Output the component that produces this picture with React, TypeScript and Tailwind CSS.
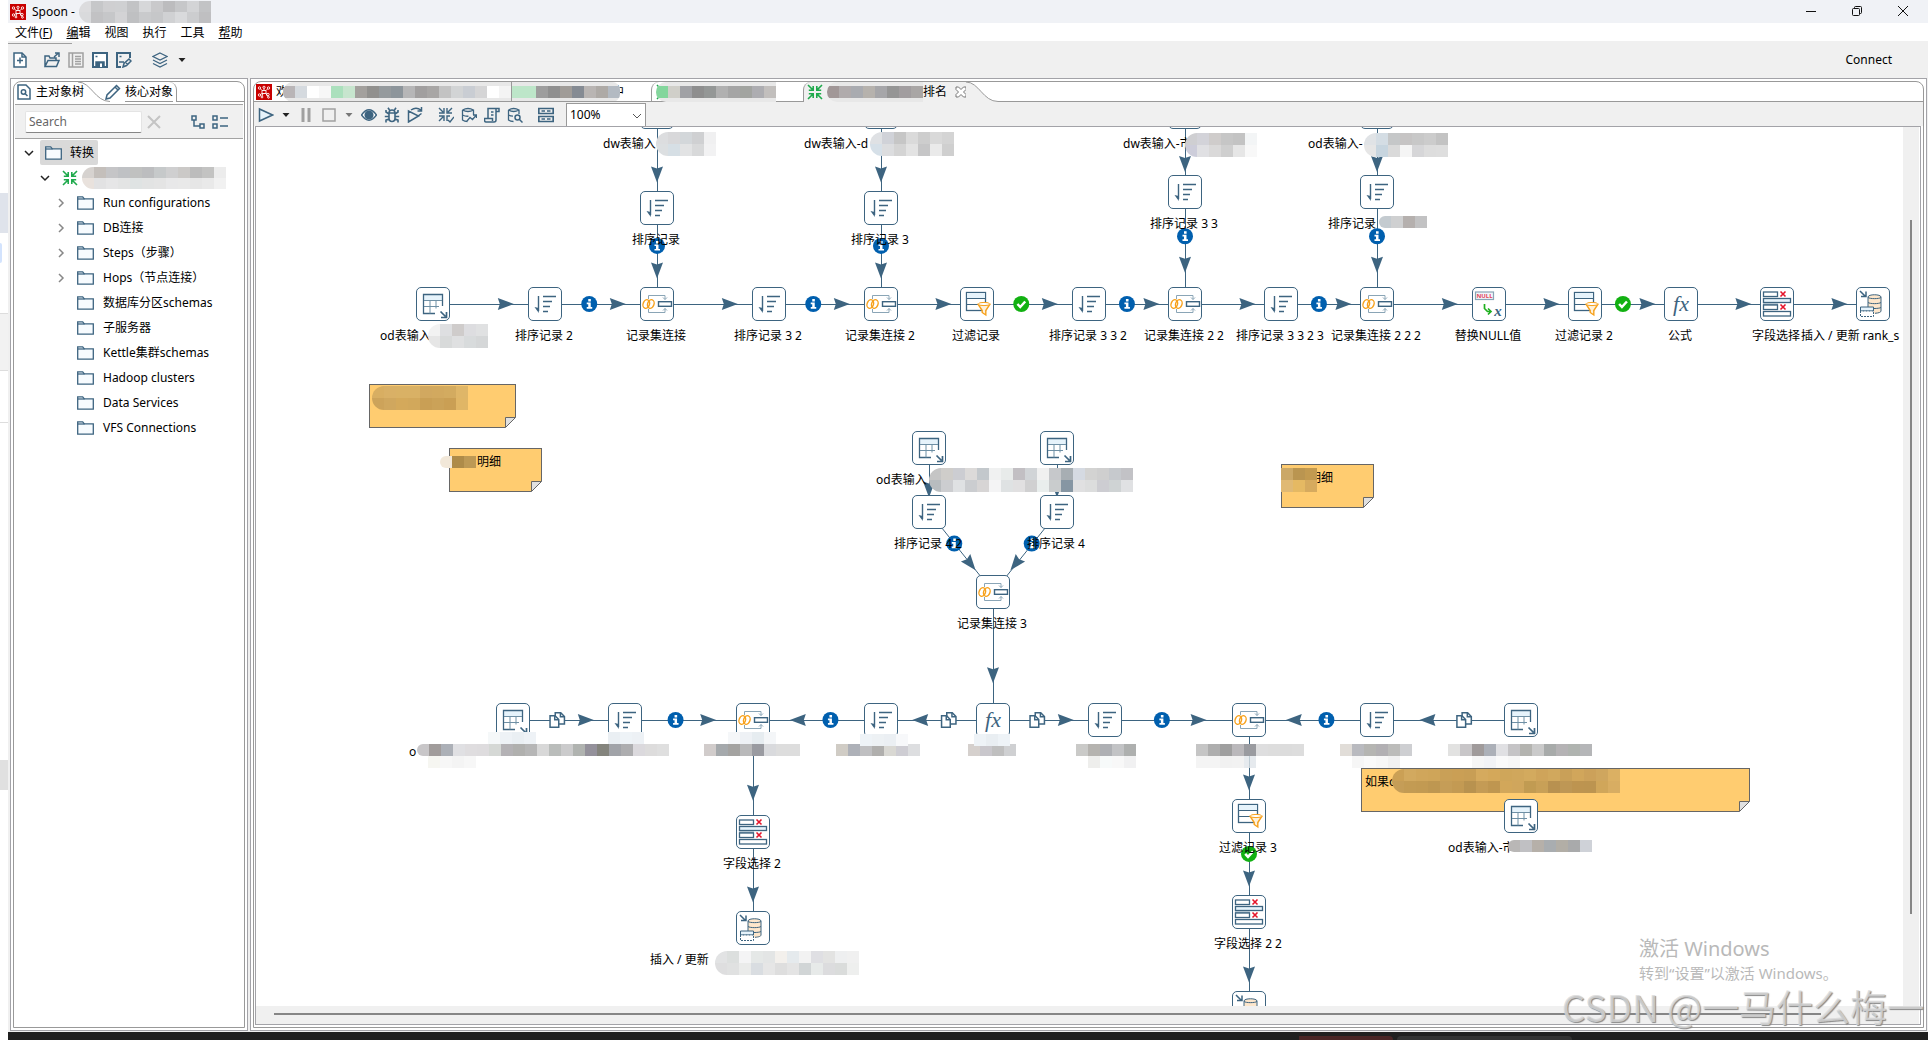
import React, { useState } from 'react';
import clsx from 'clsx';

type StepKind = 'table' | 'sort' | 'join' | 'filter' | 'formula' | 'select' | 'upsert' | 'nullif';
type HopBadge = 'info' | 'check' | 'copy';

interface Step {
  id: string;
  kind: StepKind;
  x: number;
  y: number;
  label?: string;
  // set when part of the name is masked, so the label can't be centred
  labelX?: number;
}

interface Hop {
  from: string;
  to: string;
  badge?: HopBadge;
}

interface MaskData {
  x: number;
  y: number;
  rows: string[][];
  round?: boolean;
  faded?: boolean;
}

interface NoteData {
  x: number;
  y: number;
  w: number;
  text?: string;
  indent?: boolean;
}

const INK = '#3d6480';

const steps: Step[] = [
  { id: 'dw1', kind: 'table', x: 401, y: -15, label: 'dw表输入', labelX: 347 },
  { id: 'dw2', kind: 'table', x: 625, y: -15, label: 'dw表输入-d', labelX: 548 },
  { id: 'dw3', kind: 'table', x: 929, y: -15, label: 'dw表输入-市', labelX: 867 },
  { id: 'od1', kind: 'table', x: 1121, y: -15, label: 'od表输入-', labelX: 1052 },
  { id: 's1', kind: 'sort', x: 401, y: 81, label: '排序记录' },
  { id: 's3', kind: 'sort', x: 625, y: 81, label: '排序记录 3' },
  { id: 's33', kind: 'sort', x: 929, y: 65, label: '排序记录 3 3' },
  { id: 's333', kind: 'sort', x: 1121, y: 65, label: '排序记录', labelX: 1072 },
  { id: 'od2', kind: 'table', x: 177, y: 177, label: 'od表输入', labelX: 124 },
  { id: 's2', kind: 'sort', x: 289, y: 177, label: '排序记录 2' },
  { id: 'j1', kind: 'join', x: 401, y: 177, label: '记录集连接' },
  { id: 's32', kind: 'sort', x: 513, y: 177, label: '排序记录 3 2' },
  { id: 'j2', kind: 'join', x: 625, y: 177, label: '记录集连接 2' },
  { id: 'f1', kind: 'filter', x: 721, y: 177, label: '过滤记录' },
  { id: 's332', kind: 'sort', x: 833, y: 177, label: '排序记录 3 3 2' },
  { id: 'j22', kind: 'join', x: 929, y: 177, label: '记录集连接 2 2' },
  { id: 's3323', kind: 'sort', x: 1025, y: 177, label: '排序记录 3 3 2 3' },
  { id: 'j222', kind: 'join', x: 1121, y: 177, label: '记录集连接 2 2 2' },
  { id: 'nul', kind: 'nullif', x: 1233, y: 177, label: '替换NULL值' },
  { id: 'f2', kind: 'filter', x: 1329, y: 177, label: '过滤记录 2' },
  { id: 'fx1', kind: 'formula', x: 1425, y: 177, label: '公式' },
  { id: 'sel1', kind: 'select', x: 1521, y: 177, label: '字段选择', labelX: 1496 },
  { id: 'up1', kind: 'upsert', x: 1617, y: 177, label: '插入 / 更新 rank_s', labelX: 1545 },
  { id: 'od3', kind: 'table', x: 673, y: 321, label: 'od表输入', labelX: 620 },
  { id: 'od4', kind: 'table', x: 801, y: 321 },
  { id: 's42', kind: 'sort', x: 673, y: 385, label: '排序记录 4 2' },
  { id: 's4', kind: 'sort', x: 801, y: 385, label: '排序记录 4' },
  { id: 'j3', kind: 'join', x: 737, y: 465, label: '记录集连接 3' },
  { id: 'od5', kind: 'table', x: 257, y: 593, label: 'o', labelX: 153 },
  { id: 's5', kind: 'sort', x: 369, y: 593 },
  { id: 'j4', kind: 'join', x: 497, y: 593 },
  { id: 's6', kind: 'sort', x: 625, y: 593 },
  { id: 'fx2', kind: 'formula', x: 737, y: 593 },
  { id: 's7', kind: 'sort', x: 849, y: 593 },
  { id: 'j5', kind: 'join', x: 993, y: 593 },
  { id: 's8', kind: 'sort', x: 1121, y: 593 },
  { id: 'od6', kind: 'table', x: 1265, y: 593 },
  { id: 'sel2', kind: 'select', x: 497, y: 705, label: '字段选择 2' },
  { id: 'up2', kind: 'upsert', x: 497, y: 801, label: '插入 / 更新', labelX: 394 },
  { id: 'f3', kind: 'filter', x: 993, y: 689, label: '过滤记录 3' },
  { id: 'sel22', kind: 'select', x: 993, y: 785, label: '字段选择 2 2' },
  { id: 'up3', kind: 'upsert', x: 993, y: 881 },
  { id: 'od7', kind: 'table', x: 1265, y: 689, label: 'od表输入-市', labelX: 1192 },
];

const hops: Hop[] = [
  { from: 'dw1', to: 's1' },
  { from: 'dw2', to: 's3' },
  { from: 'dw3', to: 's33' },
  { from: 'od1', to: 's333' },
  { from: 's1', to: 'j1', badge: 'info' },
  { from: 's3', to: 'j2', badge: 'info' },
  { from: 's33', to: 'j22', badge: 'info' },
  { from: 's333', to: 'j222', badge: 'info' },
  { from: 'od2', to: 's2' },
  { from: 's2', to: 'j1', badge: 'info' },
  { from: 'j1', to: 's32' },
  { from: 's32', to: 'j2', badge: 'info' },
  { from: 'j2', to: 'f1' },
  { from: 'f1', to: 's332', badge: 'check' },
  { from: 's332', to: 'j22', badge: 'info' },
  { from: 'j22', to: 's3323' },
  { from: 's3323', to: 'j222', badge: 'info' },
  { from: 'j222', to: 'nul' },
  { from: 'nul', to: 'f2' },
  { from: 'f2', to: 'fx1', badge: 'check' },
  { from: 'fx1', to: 'sel1' },
  { from: 'sel1', to: 'up1' },
  { from: 'od3', to: 's42' },
  { from: 'od4', to: 's4' },
  { from: 's42', to: 'j3', badge: 'info' },
  { from: 's4', to: 'j3', badge: 'info' },
  { from: 'j3', to: 'fx2' },
  { from: 'od5', to: 's5', badge: 'copy' },
  { from: 's5', to: 'j4', badge: 'info' },
  { from: 's6', to: 'j4', badge: 'info' },
  { from: 'fx2', to: 's6', badge: 'copy' },
  { from: 'fx2', to: 's7', badge: 'copy' },
  { from: 's7', to: 'j5', badge: 'info' },
  { from: 's8', to: 'j5', badge: 'info' },
  { from: 'od6', to: 's8', badge: 'copy' },
  { from: 'j4', to: 'sel2' },
  { from: 'sel2', to: 'up2' },
  { from: 'j5', to: 'f3' },
  { from: 'f3', to: 'sel22', badge: 'check' },
  { from: 'sel22', to: 'up3' },
];

const notes: NoteData[] = [
  { x: 113, y: 257, w: 147 },
  { x: 193, y: 321, w: 93, text: '明细', indent: true },
  { x: 1025, y: 337, w: 93, text: '明细', indent: true },
  { x: 1105, y: 641, w: 389, text: '如果o' },
];

const masks: MaskData[] = [
  { x: 400, y: 5, round: true, rows: [
    ['#dcdddf', '#d8d8da', '#d3d7da', '#cfd0d2', '#f0f0f1'],
    ['#dcdfe1', '#d6dfe5', '#e2e3e4', '#d8d9da', '#f2f2f3'],
  ] },
  { x: 614, y: 5, round: true, rows: [
    ['#dfe1e4', '#d0d2d8', '#c6c6c6', '#dadada', '#cdcdcd', '#d9d9d9', '#d4d4d4'],
    ['#d6e0e8', '#dcdddf', '#d4d4d4', '#e3e3e3', '#c6c6c7', '#eaeaea', '#cfcfcf'],
  ] },
  { x: 929, y: 6, round: true, rows: [
    ['#cfcfd2', '#d3d3d9', '#cfcccb', '#c6c6c6', '#c3c3c3', '#f3f5f6'],
    ['#cdcdda', '#e0e0e3', '#dad9d9', '#cfcfcf', '#e6e6e6', '#f8f8f8'],
  ] },
  { x: 1108, y: 6, round: true, rows: [
    ['#e0e3e6', '#d4dde4', '#c5c7c8', '#c6c4c4', '#c8c8c8', '#cccccc', '#c3c3c3'],
    ['#e6e6e6', '#c7d5df', '#dadada', '#f5f5f5', '#d6d6d8', '#dddddd', '#dedede'],
  ] },
  { x: 1123, y: 89, round: true, rows: [['#c4cbd0', '#cfd0d1', '#b5b0ae', '#c2c2c3']] },
  { x: 172, y: 197, round: true, rows: [
    ['#f2f2f2', '#dedfe1', '#cfcccb', '#dddde0', '#e0e1e2'],
    ['#e6e6e6', '#d8dada', '#dfe0e1', '#d8dbdc', '#d5d7d8'],
  ] },
  { x: 673, y: 341, round: true, rows: [
    ['#c5c5c5', '#cfcdca', '#cccdd2', '#dcdad9', '#c3c8cc', '#f0f1f1', '#e8ebea', '#c2bfc3', '#d1d4d7', '#f0f0f0', '#c6c8cb', '#a7aeb3', '#d5dae2', '#d3d3d2', '#cfcfcf', '#c6c9cd', '#c2c2c6'],
    ['#b8bcbf', '#cccdd0', '#dfe1e3', '#cbcdd0', '#d7d5d5', '#f4f4f5', '#dfe2e3', '#e1e0e1', '#d0d0d1', '#e9eeed', '#c9cccd', '#8696a3', '#e0e0e1', '#dcdddd', '#cdcdd2', '#cfd3d4', '#e0e1e3'],
  ] },
  { x: 116, y: 259, round: true, rows: [
    ['#d8ae62', '#d9b066', '#d9b165', '#d9b165', '#d1a860', '#d2a95f', '#d3ab60', '#dfb668'],
    ['#cda35a', '#d0a75e', '#d4a95b', '#d2a85b', '#c99f55', '#cba258', '#ca9f54', '#e0b666'],
  ] },
  { x: 184, y: 329, round: true, rows: [['#f2e8d9', '#ae8b49', '#bd9955']] },
  { x: 1025, y: 341, rows: [
    ['#cba867', '#ba9550', '#c29a50'],
    ['#e0b974', '#e5b963', '#d6aa5e'],
  ] },
  { x: 161, y: 617, round: true, rows: [[
    '#c8c6c8', '#a19c9b', '#acb0b7', '#e0e0e3', '#dfdddf', '#dedcde', '#d5d8d5', '#b4b2b5', '#b0b0ae', '#b6b6b6', '#d8d8d8',
    '#babdbb', '#cbcbcc', '#b0b3b0', '#94919b', '#84847d', '#a1a3a8', '#adadaf', '#dbd9dd', '#dddcdc', '#dfdfdf',
  ]] },
  { x: 448, y: 617, rows: [['#d1cccb', '#a5a9ac', '#a4a3a1', '#b9b9ba', '#9a9ba1', '#d9dadd', '#dddddd', '#dddddd']] },
  { x: 580, y: 617, rows: [['#d0ccc5', '#aeb1b8', '#bfbfc1', '#b0afad', '#d9d8d3', '#cecdd3', '#dddee0']] },
  { x: 712, y: 617, rows: [['#d5d0cd', '#c9c7cc', '#bfbfbf', '#cfd0d2']] },
  { x: 820, y: 617, rows: [['#cacac8', '#b5b3af', '#aeb0b4', '#c2c3c5', '#aeb0af']] },
  { x: 940, y: 617, rows: [['#c5c5c5', '#aeaeae', '#9f9f9f', '#bab8bb', '#9a9ba0', '#dededf', '#dddddd', '#dcdcdc', '#dddddd']] },
  { x: 1084, y: 617, rows: [['#e1ddd8', '#b9babf', '#b5b5b2', '#b2b0b3', '#bcbcba', '#cecfd2']] },
  { x: 1192, y: 617, rows: [['#e2e2e1', '#c8c6c8', '#a09b9b', '#acb0b8', '#e0e0e3', '#c5c4c6', '#b4b4b0', '#cacaca', '#a8abaa', '#b5b3b5', '#b0b4b0', '#b5b6b8']] },
  // pale row over the bottom edge of the steps
  { x: 232, y: 605, rows: [['#f5f8f9', '#eef2f6', '#eaeff3', '#eef2f6']] },
  { x: 352, y: 605, rows: [['#eaeff3', '#eef3f7', '#edf1f5']] },
  { x: 472, y: 605, rows: [['#f5f7f9', '#eef1f5', '#e6ecf0', '#f4f6f8']] },
  { x: 604, y: 607, rows: [['#eef3f7', '#edf1f4', '#ebeff3', '#f7f8fa']] },
  { x: 718, y: 607, rows: [['#eef3f7', '#e9eef2', '#eef3f7']] },
  // second, fainter row that hangs under the masked names
  { x: 172, y: 629, faded: true, rows: [['#f4f4ee', '#f6f6f6', '#f2f2f2', '#f6f6f6']] },
  { x: 832, y: 629, faded: true, rows: [['#ebebe8', '#f6f9fa', '#f7f7f7', '#eeeeef']] },
  { x: 940, y: 629, faded: true, rows: [['#f2f2f2', '#f2f2f2', '#eeeeee', '#f0f0f0', '#e0e6ea']] },
  { x: 1096, y: 629, faded: true, rows: [['#f5f5f5', '#fafafa', '#f6f6f6', '#eeeeee']] },
  { x: 1216, y: 629, faded: true, rows: [['#f5f5f5', '#eff1f5', '#fafafa', '#f6f6f6']] },
  { x: 1136, y: 642, round: true, rows: [
    ['#cba055', '#d2a95f', '#d0a65b', '#cfa559', '#c9a057', '#ca9f55', '#c89e55', '#d5aa5e', '#d4a85a', '#cfa65a', '#d0a75c', '#d3aa5e', '#cfa45a', '#d1a85d', '#c9a058', '#d1a65b', '#cca15a', '#cfa65e', '#dbb063'],
    ['#c59d57', '#c39b53', '#c29a52', '#be9751', '#c59d57', '#c39a53', '#b8924f', '#c49b55', '#bf9650', '#d2a75a', '#d0a65c', '#c19b52', '#c8a057', '#b89150', '#be9755', '#bd9450', '#bc9450', '#d0a65a', '#d8ad62'],
  ] },
  { x: 1252, y: 713, round: true, rows: [['#b9b7b6', '#c0c0c3', '#b6b0a9', '#a9adb0', '#b2aea6', '#a9aaab', '#cfd2d8']] },
  { x: 459, y: 824, round: true, rows: [
    ['#e2e3e4', '#dcdfde', '#f4f4f5', '#e5e8e7', '#e3e5e5', '#f3f0ec', '#e5eaed', '#f2f2f2', '#dfdfe3', '#e3e3e2', '#eeeff0', '#f0f0f0'],
    ['#dededf', '#e0e1e1', '#eaebea', '#d9dde1', '#e6e6e6', '#dedede', '#e4e4e4', '#d1d5d6', '#e7eae9', '#dcdcde', '#dadcdb', '#eeefee'],
  ] },
];

function StepIcon({ kind }: { kind: StepKind }) {
  if (kind === 'formula') {
    return <span className="font-['Liberation_Serif',serif] text-[22px] italic leading-none text-[#3d6480]">fx</span>;
  }

  return (
    <svg viewBox="0 0 34 34" className="size-[34px] shrink-0" fill="none" stroke={INK}>
      {kind === 'sort' && (
        <>
          <path d="M10.5 9v15" strokeWidth="1.4" />
          <path d="M6.500 20l4.300 1v5z" fill={INK} stroke="none" />
          <path d="M15 9.500h13M15 14.500h9M15 19.500h7M15 24.500h5" strokeWidth="1.400" />
        </>
      )}
      {kind === 'join' && (
        <>
          <g stroke="#f7a11b" strokeWidth="1.400">
            <ellipse cx="6.300" cy="17" rx="3.200" ry="4.400" transform="rotate(20 6.300 17)" />
            <ellipse cx="10.800" cy="17" rx="3.200" ry="4.400" transform="rotate(20 10.800 17)" />
          </g>
          <rect x="18.500" y="14.700" width="13" height="4.600" strokeWidth="1.400" />
          <g stroke="#8aa5b6">
            <path d="M8.500 12V8.500h16.500v4M8.500 22v3.500h16.500v-4" />
            <path d="M23 10.500l2 2 2-2M23 23.500l2-2 2 2" />
          </g>
        </>
      )}
      {kind === 'table' && (
        <>
          <rect x="8" y="8" width="18" height="5" fill="#e6f3fb" stroke="none" />
          <path d="M26.500 19V7.500h-19v19H19" strokeWidth="1.300" />
          <path d="M8 13.500h18M8 19.500h15M14 13.500v13M20 13.500v8" stroke="#6f90a5" />
          <path d="M24.500 24.500l5 5M30.500 25v5.500H25" strokeWidth="1.700" />
        </>
      )}
      {kind === 'filter' && (
        <>
          <rect x="6.500" y="5.500" width="19" height="18" fill="#fff" strokeWidth="1.300" />
          <path d="M7 6h18v5H7z" fill="#e6f3fb" stroke="none" />
          <path d="M7 11.500h18M7 17.500h18" />
          <path d="M18.200 17.500h11.600l-4 6v4.500l-3.600-2.500v-2z" fill="#fdf0da" stroke="#f7a11b" strokeWidth="1.400" />
          <ellipse cx="24" cy="17" rx="5.600" ry="1.600" fill="#fff" stroke="#f7a11b" />
        </>
      )}
      {kind === 'select' && (
        <>
          <rect x="3.500" y="5" width="14" height="4.500" strokeWidth="1.300" />
          <rect x="3.500" y="11.500" width="27" height="4" fill="#e6f3fb" strokeWidth="1.300" />
          <path d="M3 16.500h15v1.500H3z" fill="#7f9db2" stroke="none" />
          <rect x="3.500" y="18" width="14" height="4.500" strokeWidth="1.300" />
          <rect x="3.500" y="24.500" width="27" height="4.500" strokeWidth="1.300" />
          <path d="M20.500 4.500l5 5M25.500 4.500l-5 5M20.500 17.500l5 5M25.500 17.500l-5 5" stroke="#e4152b" strokeWidth="1.600" />
        </>
      )}
      {kind === 'upsert' && (
        <>
          <path d="M4 4l5 5M10 4.500v5H5" strokeWidth="1.500" />
          <path d="M12 10c0-3 13-3 13 0v14c0 1.500-3 2.500-7 2.500h-6z" fill="#fde6cb" stroke="none" />
          <path d="M12 20V10c0-3 13-3 13 0v14c0 1.200-2 2-6 2.300" />
          <path d="M12 10.500c2 1.500 11 1.500 13 0M12 15.500c2 1.500 11 1.500 13 0M18 21.500c3 0 6-.3 7-1" />
          <path d="M4.500 24v-4h13v4z" fill="#e6f3fb" />
          <path d="M4.500 24v5.500h13V24z" fill="#fff" strokeDasharray="2 1" />
        </>
      )}
      {kind === 'nullif' && (
        <>
          <rect x="3.500" y="5" width="18" height="7.500" fill="#f1f6fa" stroke="#8aa5b6" strokeWidth="1.200" />
          <text x="12.500" y="11.200" textAnchor="middle" fontSize="6" fontWeight="700" fill="#e4455a" stroke="none">NULL</text>
          <path d="M12.500 17v4.500l3 3h3M16 21.500l3 3-3 3" stroke="#1fb01f" strokeWidth="1.700" />
          <text x="26" y="28.500" textAnchor="middle" fontFamily="Liberation Serif" fontStyle="italic" fontWeight="700" fontSize="15" fill={INK} stroke="none">x</text>
        </>
      )}
    </svg>
  );
}

function Badge({ kind, x, y }: { kind: HopBadge; x: number; y: number }) {
  return (
    <g transform={`translate(${x} ${y})`}>
      {kind === 'info' && (
        <>
          <circle r="8" fill="#005fae" />
          <path d="M-1 -5h2.600v2.500h-2.600zM-2.500 -1.500h4v4.500h1.500v1.700h-5.500v-1.700h1.500v-2.800h-1.500z" fill="#fff" />
        </>
      )}
      {kind === 'check' && (
        <>
          <circle r="8" fill="#12b112" />
          <path d="M-3.800 0l2.800 3 5-5.500" fill="none" stroke="#fff" strokeWidth="2.500" />
        </>
      )}
      {kind === 'copy' && (
        <g fill="#fff" stroke={INK} strokeWidth="1.500">
          <path d="M-2 -7.200h5.500l3.700 3.700V4h-9.200z" />
          <path d="M3.200 -7v3.800H7" fill="none" />
          <path d="M-7.200 -4.200h5l3.700 3.700v7.700h-8.700z" />
          <path d="M-2.500 -4v3.800H1.300" fill="none" />
        </g>
      )}
    </g>
  );
}

function HopLine({ hop }: { hop: Hop }) {
  const a = steps.find(s => s.id === hop.from)!;
  const b = steps.find(s => s.id === hop.to)!;
  const at = (t: number) => ({ x: a.x + (b.x - a.x) * t, y: a.y + (b.y - a.y) * t });
  const angle = (Math.atan2(b.y - a.y, b.x - a.x) * 180) / Math.PI;
  const arrow = at(0.65);
  const badge = at(0.395);

  return (
    <g>
      <line x1={a.x + 0.5} y1={a.y + 0.5} x2={b.x + 0.5} y2={b.y + 0.5} stroke={INK} />
      <path
        d="M8 0L-8 -6L-6 0L-8 6z"
        fill={INK}
        transform={`translate(${arrow.x} ${arrow.y}) rotate(${angle})`}
      />
      {hop.badge && <Badge kind={hop.badge} x={badge.x} y={badge.y} />}
    </g>
  );
}

function Note({ note }: { note: NoteData }) {
  return (
    <div
      className="absolute h-11 border border-[#666] bg-[#ffcc70] px-[3px] pt-1 leading-[17px]"
      style={{ left: note.x, top: note.y, width: note.w }}
    >
      <span className={note.indent ? 'pl-6' : ''}>{note.text}</span>
      <svg viewBox="0 0 11 11" className="absolute -bottom-px -right-px size-[11px]">
        <path d="M0 11L11 0v11z" fill="#fff" />
        <path d="M.5 10.500V.5h10z" fill="#e0e0e0" stroke="#666" />
      </svg>
    </div>
  );
}

interface PixelsProps {
  rows: string[][];
  round?: boolean;
  faded?: boolean;
  short?: boolean;
  halo?: boolean;
}

function Pixels({ rows, round, faded, short, halo }: PixelsProps) {
  return (
    <div
      className={clsx(
        'relative z-10 overflow-hidden',
        round && 'rounded-l-full',
        faded && 'opacity-80',
        halo && 'rounded-r-lg bg-[#e8e8e8] py-1',
      )}
    >
      {rows.map((row, i) => (
        <div key={i} className="flex">
          {row.map((color, j) => (
            <i key={j} className={clsx('w-3 shrink-0', short ? 'h-[11px]' : 'h-3')} style={{ backgroundColor: color }} />
          ))}
        </div>
      ))}
    </div>
  );
}

function Icon({ children, muted }: { children: React.ReactNode; muted?: boolean }) {
  return (
    <svg viewBox="0 0 16 16" className="size-4 shrink-0" fill="none" stroke={muted ? '#a0a0a0' : INK} strokeWidth="1.500">
      {children}
    </svg>
  );
}

function Logo() {
  return (
    <svg viewBox="0 0 16 16" className="size-4 shrink-0" fill="none" stroke="#fff" strokeWidth=".9">
      <rect width="16" height="16" fill="#c80000" stroke="none" />
      <circle cx="3.500" cy="4" r="1.200" />
      <circle cx="8" cy="3.300" r="1.100" />
      <circle cx="12.500" cy="4" r="1.200" />
      <circle cx="3.500" cy="11" r="1.200" />
      <circle cx="12" cy="10.500" r="1.200" />
      <circle cx="6" cy="13" r=".9" />
      <circle cx="12.500" cy="13.300" r=".9" />
      <path d="M4.500 4.800L6 6.500h4L11.500 5M6 6.500v3L4.500 10.500M10 6.500v3l1 .8M6 9.500h4M8 4.500v2M6 12l1-2.500M10 9.500l1.500 3" />
    </svg>
  );
}

function TransIcon() {
  return (
    <svg viewBox="0 0 16 16" className="size-4 shrink-0" fill="none" stroke="#1faa4c" strokeWidth="1.600">
      <path d="M1 1l5 5M6.200 2v4.200H1.800M15 1l-5 5M9.800 2v4.200h4.400M1 15l5-5M6.200 14V9.800H1.800M15 15l-5-5M9.800 14V9.800h4.400" />
    </svg>
  );
}

function Folder() {
  return (
    <svg viewBox="0 0 17 14" className="h-[14px] w-[17px] shrink-0" fill="#f7fbfe" stroke={INK} strokeWidth="1.300">
      <path d="M.7 13.200V.8h5l1.600 2h9v10.400z" />
      <path d="M1 3h6.500" />
    </svg>
  );
}

function Caret({ muted }: { muted?: boolean }) {
  return (
    <svg viewBox="0 0 10 6" className="h-[6px] w-[10px]">
      <path d="M1.500 1h7L5 5z" fill={muted ? '#777' : '#222'} />
    </svg>
  );
}

function Chevron({ open }: { open?: boolean }) {
  return (
    <svg viewBox="0 0 10 10" className="size-[10px] shrink-0" fill="none" strokeWidth="1.500" stroke={open ? '#222' : '#888'}>
      <path d={open ? 'M1 3l4 4 4-4' : 'M3 1l4 4-4 4'} />
    </svg>
  );
}

function TabCurve({ fill }: { fill: string }) {
  return (
    <svg viewBox="0 0 32 20" className="h-5 w-8 shrink-0" fill={fill}>
      <path d="M0 0C13 0 17 19.500 32 19.500V20H0z" stroke="none" />
      <path d="M0 0C13 0 17 19.500 32 19.500" fill="none" stroke="#999" />
    </svg>
  );
}

const treeItems = [
  { label: 'Run configurations', expandable: true },
  { label: 'DB连接', expandable: true },
  { label: 'Steps（步骤）', expandable: true },
  { label: 'Hops（节点连接）', expandable: true },
  { label: '数据库分区schemas' },
  { label: '子服务器' },
  { label: 'Kettle集群schemas' },
  { label: 'Hadoop clusters' },
  { label: 'Data Services' },
  { label: 'VFS Connections' },
];

function TitleBar() {
  return (
    <header className="relative flex h-[23px] shrink-0 items-center bg-[#f0f2f6] pl-[2px]">
      <Logo />
      <h1 className="ml-[6px] whitespace-nowrap">Spoon -</h1>
      <div className="ml-1">
        <Pixels
          short
          round
          rows={[
            ['#dcdcde', '#c6c7c9', '#cfcfd1', '#cfd0d2', '#c2c3c5', '#d6d7d9', '#c9c9cb', '#bcbcbe', '#c6c7c9', '#d3d4d6', '#c2c3c5'],
            ['#d9dadc', '#c2c2c4', '#c6c7c9', '#d3d3d5', '#bfc0c2', '#c9cacc', '#c6c7c9', '#d0d1d3', '#d9dadc', '#cccdcf', '#bfbfc1'],
          ]}
        />
      </div>
      <div className="ml-auto mr-[2px] flex h-full items-center pb-[2px] text-[#111]">
        <button aria-label="最小化" className="flex w-[46px] justify-center">
          <svg viewBox="0 0 10 10" className="size-[10px]" stroke="currentColor"><path d="M0 5.500h10" /></svg>
        </button>
        <button aria-label="还原" className="flex w-[46px] justify-center">
          <svg viewBox="0 0 10 10" className="size-[10px]" fill="none" stroke="currentColor">
            <rect x=".5" y="2.500" width="7" height="7" rx="1" />
            <path d="M2.500 2.500V1.500q0-1 1-1h5q1 0 1 1v5q0 1-1 1h-1" />
          </svg>
        </button>
        <button aria-label="关闭" className="flex w-[46px] justify-center">
          <svg viewBox="0 0 10 10" className="size-[10px]" stroke="currentColor"><path d="M0 0l10 10M10 0L0 10" /></svg>
        </button>
      </div>
    </header>
  );
}

function MainToolbar() {
  return (
    <div className="relative flex h-[37px] shrink-0 items-center bg-[#f0f0f0] pl-1 pr-9 before:absolute before:left-0 before:top-[2px] before:h-px before:w-16 before:bg-[#a0a0a0]">
      <button aria-label="新建">
        <Icon><path d="M2 1h8l4 4v10H2z" fill="#fff" /><path d="M10 1v4h4M8 5.500v6M5 8.500h6" /></Icon>
      </button>
      <button aria-label="打开" className="ml-4">
        <Icon><path d="M1 14V4h4l1 2h6v3M1 14.500l3-6h11l-2.500 6zM10 5l4-3.500M11 1h4v4" /></Icon>
      </button>
      <button aria-label="浏览" className="ml-2">
        <Icon muted><rect x="1" y="1" width="14" height="14" /><path d="M4.500 1v14M7 4.500h6M7 7h6M7 9.500h6M7 12h6" /></Icon>
      </button>
      <button aria-label="保存" className="ml-2">
        <Icon><path d="M1 1h14v14H1z" fill="#fff" strokeWidth="2" /><path d="M4 10h8v5H4z" fill={INK} /><path d="M8 11.500h2V15H8z" fill="#fff" stroke="none" /><path d="M3.500 4.500h2" /></Icon>
      </button>
      <button aria-label="另存为" className="ml-2">
        <Icon><path d="M14 6V1H1v14h4" strokeWidth="2" /><path d="M3.500 4.500h2M3 10h5M7 15l1-3.500L13 7l2 2-4.500 4.500zM10 11l2 1.500" /></Icon>
      </button>
      <button aria-label="透视图" className="ml-5 flex items-center gap-[9px]">
        <Icon><path d="M8 1l7 3.500L8 8 1 4.500zM1 8l7 3.500L15 8M1 11.500L8 15l7-3.500" strokeWidth="1.200" /></Icon>
        <Caret />
      </button>
      <button className="ml-auto">Connect</button>
    </div>
  );
}

function Explorer() {
  const [query, setQuery] = useState('');

  return (
    <aside className="flex w-[238px] shrink-0 flex-col border border-[#a3a3a8] bg-white p-[2px]">
      <div className="flex flex-1 flex-col rounded-t-lg border border-[#999] bg-white">
        <div className="flex h-5 shrink-0">
          <button className="flex items-center gap-1 whitespace-nowrap pl-[2px]">
            <Icon><path d="M2 1h8l4 4v10H2z" fill="#fff" /><circle cx="7.500" cy="8" r="2.200" /><path d="M9 9.500l2.500 2.500" /></Icon>
            主对象树
          </button>
          <div className="-ml-[6px]"><TabCurve fill="none" /></div>
          <button className="-ml-[5px] flex items-center gap-1 whitespace-nowrap rounded-tr-lg border-r border-[#999] pr-[3px]">
            <Icon><path d="M1 15l1-4L11.500 1.500l3 3L5 14zM10 3l3 3" fill="#fff" /></Icon>
            <span className="h-5 border-b border-[#999] leading-5">核心对象</span>
          </button>
          <div className="flex-1 border-b border-[#999]" />
        </div>
        <div className="mx-px mt-[2px] flex h-[35px] shrink-0 items-center border-y border-[#a3a3a3] bg-[#f0f0f0] pl-[10px] pr-[15px]">
          <input
            aria-label="Search"
            placeholder="Search"
            value={query}
            onChange={(e) => setQuery(e.target.value)}
            className="h-[22px] w-[117px] min-w-0 rounded-[2px] border border-[#e4e4e4] border-b-[#868686] bg-white px-[3px] outline-none placeholder:text-[#666]"
          />
          <button aria-label="清除" className="ml-1" onClick={() => setQuery('')}>
            <svg viewBox="0 0 16 16" className="size-4" stroke="#c4c4c4" strokeWidth="2"><path d="M2 2l12 12M14 2L2 14" /></svg>
          </button>
          <button aria-label="展开全部" className="ml-auto">
            <Icon><path d="M2 2h4v4H2zM10 10h4v4h-4zM4 6v6h6" /></Icon>
          </button>
          <button aria-label="折叠全部" className="ml-[6px]">
            <Icon><path d="M1 2h4v4H1zM1 10h4v4H1zM8 4h8M8 12h8" /></Icon>
          </button>
        </div>
        <ul className="mt-px">
          <li className="flex h-[25px] items-center pl-[10px]">
            <Chevron open />
            <span className="ml-[6px] flex h-[25px] items-center gap-2 rounded-[2px] bg-[#d9d9d9] pl-[5px] pr-1">
              <Folder />转换
            </span>
          </li>
          <li className="flex h-[25px] items-center pl-[26px]">
            <Chevron open />
            <span className="ml-3 mr-1"><TransIcon /></span>
            <Pixels
              round
              short
              rows={[
                ['#d6d2cf', '#c4bfbb', '#c5c5c7', '#bfc1c4', '#c0c1c0', '#bcbdbf', '#c6c9ca', '#cfcfd0', '#cbc9c7', '#bcbcbc', '#c3c3c2', '#ececec'],
                ['#e9e2dd', '#e2e2e3', '#e6e6e7', '#e3e4e4', '#dfe3e3', '#e2e3e3', '#e4e4e4', '#e8e8e9', '#e9e9e9', '#e6e6e6', '#e9e9e9', '#f1f1f1'],
              ]}
            />
          </li>
          {treeItems.map((item) => (
            <li key={item.label} className="flex h-[25px] items-center pl-[42px]">
              {item.expandable ? <Chevron /> : <span className="w-[10px]" />}
              <span className="ml-[11px] flex items-center gap-[9px] whitespace-nowrap"><Folder />{item.label}</span>
            </li>
          ))}
        </ul>
      </div>
    </aside>
  );
}

function EditorTabs() {
  return (
    <div className="flex h-5 shrink-0">
      <button aria-label="欢迎" className="flex w-[257px] items-center overflow-hidden whitespace-nowrap border-b border-[#999] pl-[2px]">
        <Logo />
        <span className="ml-1">欢</span>
        <span className="-ml-[5px]">
          <Pixels round halo rows={[[
            '#b9b5b7', '#d5dadf', '#ffffff', '#f7f7f7', '#abe0bd', '#c7e5ce', '#a3a09d', '#91908e', '#959a9d', '#8d959b',
            '#b6b6b7', '#a19f9f', '#a8a6a5', '#c3c3c3', '#d2d4d5', '#c9cdd3', '#d5d5d6', '#ffffff', '#f4f4f4',
          ]]} />
        </span>
      </button>
      <button aria-label="转换 1" className="flex w-[140px] items-center overflow-hidden whitespace-nowrap border-b border-l border-[#999]">
        <Pixels halo rows={[[
          '#bde6c9', '#bde6c9', '#9d9d9d', '#8f8f8f', '#a09c98', '#858b93', '#b9b5b3', '#aeaaa6', '#b3bac2',
        ]]} />
        <span className="-ml-2">中</span>
      </button>
      <button aria-label="转换 2" className="flex w-[152px] items-center rounded-tl-lg border-b border-l border-[#999] pl-1">
        <TransIcon />
        <span className="-ml-4">
          <Pixels round halo rows={[['#83d69c', '#d0cfc9', '#a0a1a5', '#8e8e8e', '#949796', '#b0b0b0', '#a5a5a5', '#a2a4a0', '#adadb1', '#c2bfbd']]} />
        </span>
      </button>
      <button className="flex items-center whitespace-nowrap rounded-tl-lg border-l border-[#999] bg-[#f0f0f0] pl-[3px]">
        <TransIcon />
        <span className="ml-1">
          <Pixels round halo rows={[['#a19797', '#b0abac', '#a9abb0', '#b6b2ad', '#a6a6a9', '#959595', '#a19d9f', '#a9a6a5']]} />
        </span>
        排名
        <svg viewBox="0 0 12 12" className="ml-2 size-3" fill="#fff" stroke="#777">
          <path d="M1 1h2.500L6 3.500 8.500 1H11v2.500L8.500 6 11 8.500V11H8.500L6 8.500 3.500 11H1V8.500L3.500 6 1 3.500z" />
        </svg>
      </button>
      <div className="-ml-px"><TabCurve fill="#f0f0f0" /></div>
      <div className="flex-1 border-b border-[#999]" />
    </div>
  );
}

function EditorToolbar() {
  const [zoom, setZoom] = useState('100%');

  return (
    <div className="flex h-6 shrink-0 items-center gap-[7px] bg-[#f0f0f0] pl-1 pt-px">
      <button aria-label="运行"><Icon><path d="M1.500 2l13 6-13 6z" fill="#e6f3fb" /></Icon></button>
      <button aria-label="运行选项"><Caret /></button>
      <button aria-label="暂停"><Icon muted><path d="M3.500 1h3v14h-3zM9.500 1h3v14h-3z" fill="#a0a0a0" stroke="none" /></Icon></button>
      <button aria-label="停止"><Icon muted><rect x="2" y="2" width="12" height="12" /></Icon></button>
      <button aria-label="停止选项"><Caret muted /></button>
      <button aria-label="预览">
        <Icon><path d="M.5 8q7.500-10.500 15 0-7.500 10.500-15 0z" fill="#fff" /><circle cx="8" cy="8" r="3.800" fill={INK} /></Icon>
      </button>
      <button aria-label="调试">
        <Icon><path d="M5 6h6v5q0 3.500-3 3.500T5 11zM5 6q0-3 3-3t3 3M5.500 3L4 .8M10.500 3L12 .8M5 7L2 5V3M11 7l3-2V3M5 9.500H.8M11 9.500h4.200M5 12l-3 1v2.500M11 12l3 1v2.500" strokeWidth="1.600" /></Icon>
      </button>
      <button aria-label="重放"><Icon><path d="M1.500 15V4l10 5zM4 3q5-3.500 10 0M14.500 0v4h-4M11 9l3.500-2.500" /></Icon></button>
      <button aria-label="校验" className="ml-2">
        <Icon><path d="M1 1l4 4M6 1v5H1M14 1l-4 4M9 1v5h5M1 14l4-4M6 14V9H1M9 14V9h3M10 13l2 2 4-5" strokeWidth="1.400" /></Icon>
      </button>
      <button aria-label="影响分析">
        <Icon><path d="M1.500 3q5.500-3 11 0v5M1.500 3v10q2 1.500 5 1.500M1.500 3q5.500 3 11 0M1.500 8q3 1.500 6 1.200M6 14l3-3.500 2.500 2 3.500-4M12 8h3.500v3" strokeWidth="1.300" /></Icon>
      </button>
      <button aria-label="SQL">
        <Icon><path d="M4 11V1.500h11v3h-3V13q0 2-2 2H2q-1.500 0-1.500-2v-1.500h8V14M12 4.500V1.500M7 5h2.500M7 8h2.500" /></Icon>
      </button>
      <button aria-label="浏览数据库">
        <Icon><path d="M1.500 3q5-3 10.500 0v4M1.500 3v10q2 1.500 5 1.500M1.500 3q5 3 10.500 0M1.500 8q2 1.200 4.500 1.200" strokeWidth="1.300" /><circle cx="10.500" cy="10.500" r="2.500" /><path d="M12.500 12.500l3 3" /></Icon>
      </button>
      <button aria-label="显示结果" className="ml-2">
        <Icon><path d="M.8 1.500h14.400v5H.8zM.8 9.500h14.400v5H.8z" strokeWidth="1.700" /><path d="M3.500 4h3.500M9 4h3.500M3.500 12H7M9 12h3.500" /></Icon>
      </button>
      <div className="relative ml-[5px] h-[23px] w-[80px]">
        <select
          aria-label="缩放"
          value={zoom}
          onChange={(e) => setZoom(e.target.value)}
          className="h-full w-full appearance-none border-x border-t border-[#999] bg-white pl-[3px] outline-none"
        >
          <option>200%</option>
          <option>100%</option>
          <option>75%</option>
          <option>50%</option>
        </select>
        <svg viewBox="0 0 10 10" className="pointer-events-none absolute right-1 top-2 size-[10px]" fill="none" stroke="#555">
          <path d="M1 3l4 4 4-4" />
        </svg>
      </div>
    </div>
  );
}

function Canvas() {
  return (
    <div className="relative min-w-0 flex-1 overflow-hidden bg-white">
      {notes.map((note) => <Note key={`${note.x}-${note.y}`} note={note} />)}
      <svg className="absolute inset-0 size-full">
        {hops.map((hop) => <HopLine key={`${hop.from}-${hop.to}`} hop={hop} />)}
      </svg>
      {steps.map((step) => (
        <div
          key={step.id}
          className="absolute flex size-[34px] -translate-x-1/2 -translate-y-1/2 items-center justify-center overflow-hidden rounded-[5px] border border-[#3d6480] bg-white"
          style={{ left: step.x, top: step.y }}
        >
          <StepIcon kind={step.kind} />
        </div>
      ))}
      {steps.filter(step => step.label).map((step) => (
        <span
          key={step.id}
          className={clsx('absolute whitespace-nowrap leading-4', step.labelX === undefined && '-translate-x-1/2')}
          style={{ left: step.labelX ?? step.x - 1, top: step.y + 24 }}
        >
          {step.label}
        </span>
      ))}
      {masks.map((mask) => (
        <div key={`${mask.x}-${mask.y}`} className="absolute" style={{ left: mask.x, top: mask.y }}>
          <Pixels rows={mask.rows} round={mask.round} faded={mask.faded} />
        </div>
      ))}
    </div>
  );
}

function Editor() {
  return (
    <main className="flex min-w-0 flex-1 flex-col border border-[#a3a3a8] bg-white p-[2px]">
      <div className="flex min-h-0 flex-1 flex-col rounded-t-lg border border-[#999] bg-white">
        <EditorTabs />
        <EditorToolbar />
        <div className="mb-[2px] ml-px mr-[2px] flex min-h-0 flex-1 flex-col border border-[#a3a3a8] pr-px">
          <div className="flex min-h-0 flex-1">
            <Canvas />
            <div className="flex w-4 shrink-0 justify-center bg-[#f0f0f0] pb-[92px] pt-[93px]">
              <div className="w-[2px] bg-[#868686]" />
            </div>
          </div>
          <div className="flex h-[18px] shrink-0 items-center bg-[#f0f0f0] pb-[2px] pl-[18px] pr-[98px]">
            <div className="h-[2px] w-full bg-[#868686]" />
          </div>
        </div>
      </div>
    </main>
  );
}

export default function App() {
  return (
    <div className="relative flex h-screen w-full overflow-hidden bg-[#f0f0f0] font-['Noto_Sans','Noto_Sans_CJK_SC',sans-serif] text-[12px] leading-4 text-black">
      {/* edge of the window behind */}
      <div className="flex w-2 shrink-0 flex-col bg-white">
        <div className="mt-[193px] h-10 bg-[#dfe3eb]" />
        <div className="mt-[10px] h-5 w-[2px] rounded-r-full bg-[#d3e3fd]" />
        <div className="mt-[50px] h-[58px] border-y border-[#ddd] bg-[#f2f2f2]" />
        <div className="h-[52px] border-b border-[#ddd]" />
        <div className="mt-[337px] h-[30px] bg-[#e0e0e0]" />
      </div>
      <div className="flex min-w-0 flex-1 flex-col">
        <TitleBar />
        <nav className="flex h-[18px] shrink-0 items-center gap-[14px] bg-white pl-[7px] pt-[2px]">
          <button className="whitespace-nowrap">文件(<u>F</u>)</button>
          <button><u>编</u>辑</button>
          <button>视图</button>
          <button>执行</button>
          <button>工具</button>
          <button><u>帮</u>助</button>
        </nav>
        <MainToolbar />
        <div className="flex min-h-0 flex-1 gap-[2px] pb-px pl-[2px] pr-px">
          <Explorer />
          <Editor />
        </div>
        <footer className="flex h-2 shrink-0 items-end justify-end gap-1 bg-[#202020] pr-[356px]">
          <div className="h-1 w-[94px] rounded-tr-sm bg-[#4a2626]" />
          <div className="h-1 w-[175px] rounded-t-sm bg-[#333]" />
        </footer>
      </div>
      <div className="pointer-events-none absolute bottom-[57px] right-[93px] w-[196px] whitespace-nowrap text-[#b9b9b9]">
        <p className="text-[20px] leading-7">激活 Windows</p>
        <p className="text-[15px] leading-5">转到“设置”以激活 Windows。</p>
      </div>
      <div className="pointer-events-none absolute bottom-2 right-1 whitespace-nowrap font-['Noto_Sans_CJK_SC',sans-serif] text-[37px] leading-[52px] text-[#dadada]/80 [text-shadow:1px_1px_1px_#888]">
        CSDN @一马什么梅一
      </div>
    </div>
  );
}
